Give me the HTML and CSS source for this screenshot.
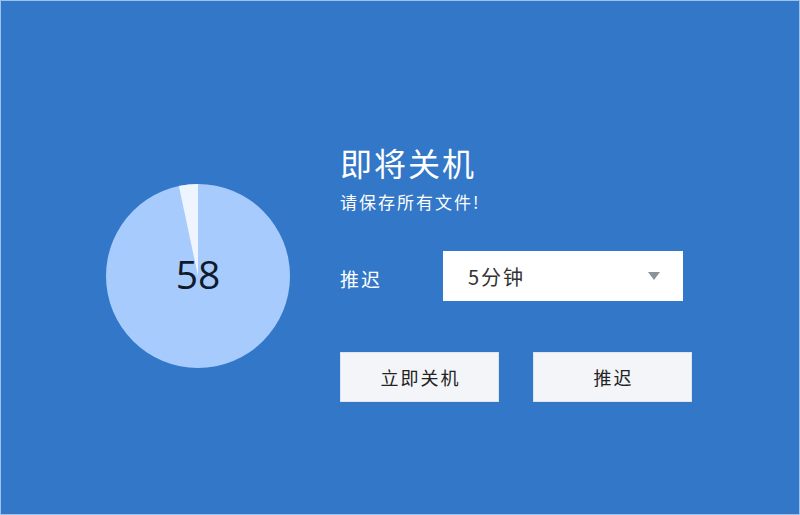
FILE: index.html
```html
<!DOCTYPE html>
<html lang="zh-CN">
  <head>
    <meta charset="UTF-8" />
    <title>即将关机</title>
    <link rel="stylesheet" href="styles.css">
  </head>
  <body>
    <div class="window">
      <div class="timer">
        <svg class="pie" width="184" height="184" viewBox="0 0 184 184">
          <circle cx="92" cy="92" r="92" fill="#a7cbfc" />
          <!-- elapsed part of the minute -->
          <path d="M92 92 L92 0 A92 92 0 0 0 72.9 2 Z" fill="#eef5fe" />
        </svg>
        <span class="count">58</span>
      </div>

      <div class="panel">
        <h1 class="title">即将关机</h1>
        <p class="hint">请保存所有文件!</p>

        <div class="delay-row">
          <label class="delay-label">推迟</label>
          <div class="select">
            <span>5分钟</span>
            <span class="arrow"></span>
          </div>
        </div>

        <div class="actions">
          <button class="btn">立即关机</button>
          <button class="btn">推迟</button>
        </div>
      </div>
    </div>
  </body>
</html>
```

FILE: styles.css
```css
body {
  margin: 0;
  font-family: "Noto Sans CJK SC", "Noto Sans", sans-serif;
}
.window {
  width: 798px;
  height: 477px;
  border: 1px solid #9cc2ee;
  background: #3277c8;
  display: flex;
  align-items: center;
  padding-top: 36px;
}
.timer {
  position: relative;
  width: 184px;
  height: 184px;
  margin-left: 105px;
}
.pie {
  display: block;
}
.count {
  position: absolute;
  left: 0;
  right: 0;
  top: 0;
  bottom: 0;
  display: flex;
  align-items: center;
  justify-content: center;
  padding-bottom: 4px;
  font-family: "Open Sans", sans-serif;
  font-size: 39px;
  color: #111a2b;
}
.panel {
  margin-left: 50px;
  margin-bottom: 2px;
  color: #fff;
}
.title {
  margin: 0;
  font-size: 32px;
  font-weight: normal;
  letter-spacing: 2px;
  line-height: 30px;
}
.hint {
  margin: 14px 0 0;
  font-size: 17px;
  letter-spacing: 2px;
  line-height: 22px;
}
.delay-row {
  display: flex;
  align-items: center;
  margin-top: 38px;
}
.delay-label {
  width: 103px;
  font-size: 19px;
  letter-spacing: 2px;
  padding-top: 4px;
}
.select {
  width: 240px;
  height: 50px;
  box-sizing: border-box;
  background: #fff;
  display: flex;
  align-items: center;
  justify-content: space-between;
  padding: 0 23px 0 25px;
  font-size: 20px;
  letter-spacing: 2px;
  color: #333;
}
.arrow {
  width: 0;
  height: 0;
  border-left: 6px solid transparent;
  border-right: 6px solid transparent;
  border-top: 8px solid #8b929b;
}
.actions {
  display: flex;
  gap: 34px;
  margin-top: 51px;
}
.btn {
  width: 159px;
  height: 50px;
  background: #f3f5f8;
  border: 1px solid #dde5ee;
  font-family: inherit;
  font-size: 18px;
  letter-spacing: 2px;
  color: #222;
  padding: 0 0 0 2px;
}
```
